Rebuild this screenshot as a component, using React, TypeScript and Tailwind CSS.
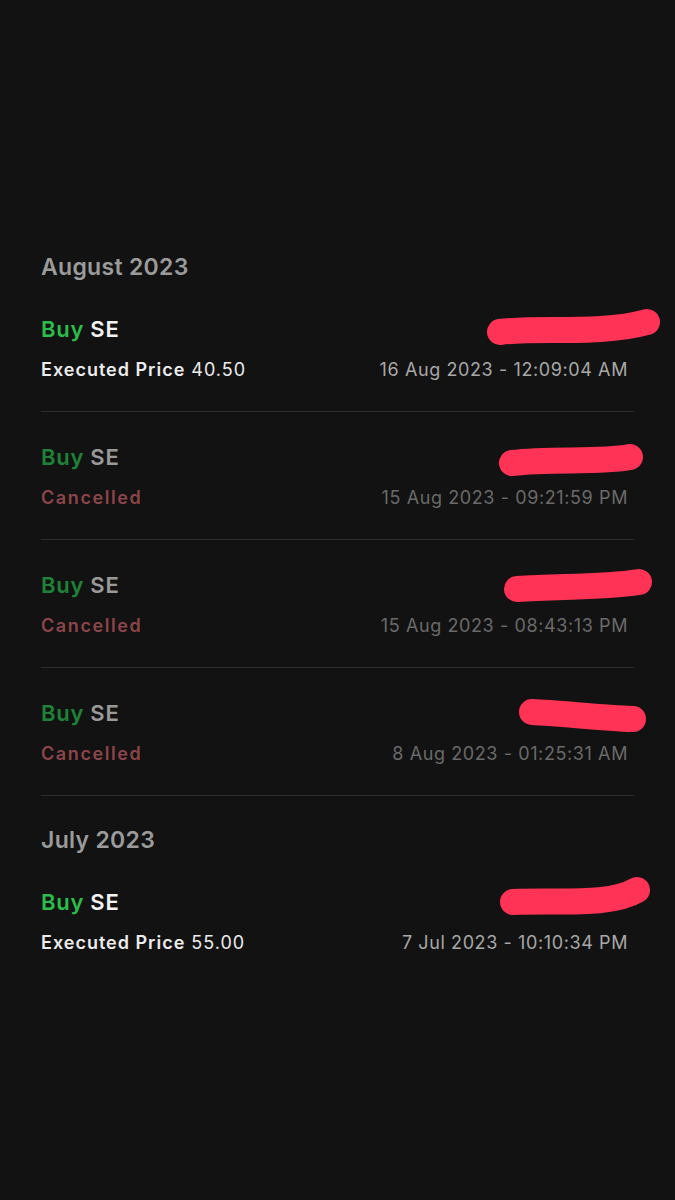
import React from "react";

type Order = {
  status: "executed" | "cancelled";
  price?: string;
  time: string;
};

const groups: { month: string; orders: Order[] }[] = [
  {
    month: "August 2023",
    orders: [
      { status: "executed", price: "40.50", time: "16 Aug 2023 - 12:09:04 AM" },
      { status: "cancelled", time: "15 Aug 2023 - 09:21:59 PM" },
      { status: "cancelled", time: "15 Aug 2023 - 08:43:13 PM" },
      { status: "cancelled", time: "8 Aug 2023 - 01:25:31 AM" },
    ],
  },
  {
    month: "July 2023",
    orders: [{ status: "executed", price: "55.00", time: "7 Jul 2023 - 10:10:34 PM" }],
  },
];

function OrderRow({ order, last }: { order: Order; last: boolean }) {
  const done = order.status === "executed";
  return (
    <div className={`pt-[30px] pr-[6px] ${last ? "" : "pb-[28px] border-b border-[#2e2e2e]"}`}>
      <div className="h-[30px] flex items-center text-[22px] font-semibold tracking-[0.8px]">
        <span className={done ? "text-[#2bbd4b]" : "text-[#1f8236]"}>Buy</span>
        <span className={`ml-[6px] ${done ? "text-[#f2f2f2]" : "text-[#9a9a9a]"}`}>SE</span>
      </div>
      <div className="mt-[11px] h-[28px] flex items-center justify-between">
        {done ? (
          <div className="flex items-center text-[18px] text-[#ececec] tracking-[1px]">
            <span className="font-semibold">Executed Price</span>
            <span className="ml-[6px]">{order.price}</span>
          </div>
        ) : (
          <span className="text-[18px] font-semibold tracking-[1.6px] text-[#8c4549]">Cancelled</span>
        )}
        <span className={`text-[18px] tracking-[0.6px] ${done ? "text-[#a8a8a8]" : "text-[#6a6a6a]"}`}>
          {order.time}
        </span>
      </div>
    </div>
  );
}

export default function App() {
  return (
    <div className="relative min-h-[1200px] bg-[#121212] font-['Inter',sans-serif]">
      <div className="px-[41px] pt-[250px]">
        {groups.map((g, gi) => (
          <div key={g.month} className={gi > 0 ? "mt-[27px]" : ""}>
            <div className="h-[34px] flex items-center text-[23px] font-semibold tracking-[0.3px] text-[#9b9b9b]">
              {g.month}
            </div>
            {g.orders.map((o, i) => (
              <OrderRow key={o.time} order={o} last={gi === groups.length - 1 && i === g.orders.length - 1} />
            ))}
          </div>
        ))}
      </div>

      {/* redaction scribbles drawn over the quantities */}
      <svg className="absolute inset-0 pointer-events-none" width="675" height="1200" viewBox="0 0 675 1200">
        <g stroke="#ff3355" strokeWidth="26" strokeLinecap="round" fill="none">
          <path d="M500 332 C540 327 600 335 647 322" />
          <path d="M512 463 C550 458 600 463 630 457" />
          <path d="M517 589 C560 586 600 588 639 582" />
          <path d="M532 712 C560 713 600 718 633 719" />
          <path d="M513 902 C560 900 610 906 637 890" />
        </g>
      </svg>
    </div>
  );
}
